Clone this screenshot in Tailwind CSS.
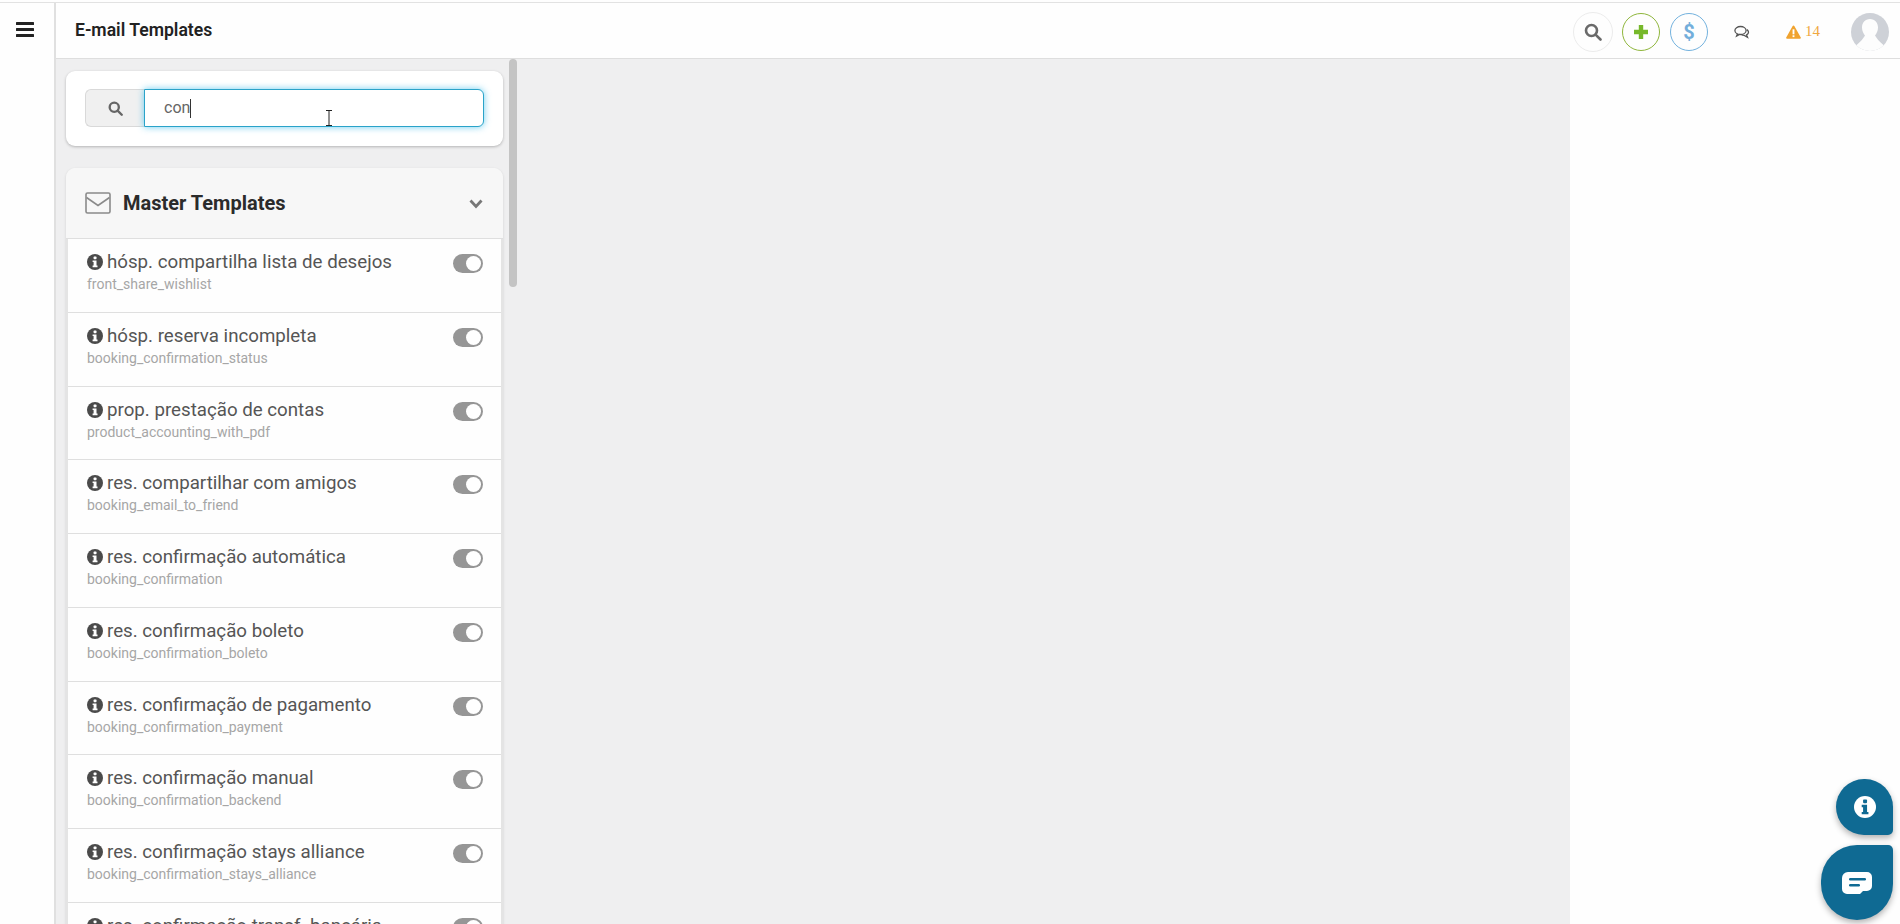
<!DOCTYPE html>
<html lang="pt-BR">
<head>
    <meta charset="UTF-8">
    <title>E-mail Templates</title>
    <script src="https://cdn.jsdelivr.net/npm/@tailwindcss/browser@4"></script>
</head>
<body class="h-screen overflow-hidden bg-[#fefefe] font-['Roboto',sans-serif]">
    <svg class="hidden">
        <symbol id="info" viewBox="0 0 16 16">
            <circle cx="8" cy="8" r="8" fill="#4a4a4a"/>
            <rect x="6.6" y="2.6" width="2.9" height="2.6" rx="0.6" fill="#fff"/>
            <path d="M5.6 6.4h3.900v5.200h1v1.700H5.600v-1.700h1V8.100h-1z" fill="#fff"/>
        </symbol>
    </svg>

    <div class="h-[2px]"></div>
    <div class="flex h-[922px] border-t border-[#e2e2e2]">
        <!-- sidebar -->
        <aside class="w-[56px] shrink-0 border-r-2 border-[#e0e0e0] pt-[19px] pl-[16px]">
            <svg width="18" height="15" viewBox="0 0 18 15" fill="#222"><rect y="0" width="18" height="3" rx="0.5"/><rect y="6" width="18" height="3" rx="0.5"/><rect y="12" width="18" height="3" rx="0.5"/></svg>
        </aside>

        <div class="flex-1 flex flex-col min-w-0">
            <!-- top bar -->
            <header class="h-[56px] shrink-0 border-b border-[#dedede] flex items-center pl-[19px]">
                <h1 class="text-[17.6px] font-semibold text-[#222]">E-mail Templates</h1>
                <div class="ml-auto mt-[2px] flex items-center pr-[11px]">
                    <div class="w-[40px] h-[40px] rounded-full border border-[#ececec] flex items-center justify-center">
                        <svg width="18" height="18" viewBox="0 0 18 18" fill="none" stroke="#6a6a6a" stroke-width="2.6"><circle cx="7.5" cy="7.5" r="5.5"/><path d="M11.800 11.800L16.500 16.500" stroke-linecap="round"/></svg>
                    </div>
                    <div class="w-[38px] h-[38px] ml-[9px] rounded-full border border-[#8fb63c] flex items-center justify-center">
                        <svg width="16" height="16" viewBox="0 0 16 16" fill="#76b82a"><path d="M5.800 1h4.400v4.800H15v4.400h-4.800V15H5.800v-4.800H1V5.800h4.800z"/></svg>
                    </div>
                    <div class="w-[38px] h-[38px] ml-[10px] rounded-full border border-[#73b2de] flex items-center justify-center text-[20px] font-bold leading-none text-[#73aedb]">$</div>
                    <svg class="ml-[26px]" width="16" height="14" viewBox="0 0 16 14" fill="none" stroke="#555" stroke-width="1.3"><ellipse cx="6.500" cy="5.500" rx="5.600" ry="4"/><path d="M3.500 8.800L2.600 11l3-1.600"/><path d="M12.800 4.600c1.600 1 2.200 2.600 1.200 4-.3.500-.8.900-1.400 1.200l.9 2.400-3.200-1.800c-1.200 0-2.300-.3-3-.9"/></svg>
                    <svg class="ml-[36px]" width="15" height="14" viewBox="0 0 16 15"><path d="M8 .5a1 1 0 0 1 .9.5l6.900 12.300a1 1 0 0 1-.9 1.500H1.100a1 1 0 0 1-.9-1.500L7.100 1A1 1 0 0 1 8 .5z" fill="#f0a32f"/><rect x="7" y="4.600" width="2" height="5.400" fill="#fff"/><rect x="7" y="11" width="2" height="2" fill="#fff"/></svg>
                    <span class="ml-[4px] w-[15px] text-[15px] leading-none text-[#f0a840] font-['Liberation_Serif',serif]">14</span>
                    <div class="ml-[31px] w-[38px] h-[38px] rounded-full bg-[#ced1d7] overflow-hidden">
                        <svg width="38" height="38" viewBox="0 0 38 38"><path d="M19 6c5 0 8 4 8 8.500 0 3.500-1.500 6-3 8 1.500 2.500 4 6 9 10l5 1v5H0v-5l5-1c5-4 7.500-7.500 9-10-1.500-2-3-4.500-3-8C11 10 14 6 19 6z" fill="#fdfdfd"/></svg>
                    </div>
                </div>
            </header>

            <!-- content -->
            <div class="flex-1 flex min-h-0">
                <div class="relative w-[1514px] shrink-0 bg-[#efeff0] pl-[10px] pt-[12px] overflow-hidden">
                    <!-- search card -->
                    <div class="w-[437px] h-[75px] bg-white rounded-[9px] shadow-[0_1px_3px_rgba(0,0,0,0.25)] pl-[19px] pt-[18px]">
                        <div class="flex h-[38px] w-[399px]">
                            <div class="w-[59px] shrink-0 bg-[#f0f0f0] border border-[#d9d9d9] border-r-0 rounded-l-[6px] flex items-center justify-center">
                                <svg width="15" height="15" viewBox="0 0 18 18" fill="none" stroke="#666" stroke-width="2.800"><circle cx="7.500" cy="7.500" r="5.500"/><path d="M11.800 11.800L16.500 16.500" stroke-linecap="round"/></svg>
                            </div>
                            <div class="flex-1 bg-white border border-[#2aa3c9] rounded-r-[6px] shadow-[0_0_7px_rgba(60,190,235,0.75)] flex items-center pl-[19px] text-[16px] text-[#666]">
                                <span>con</span><span class="w-px h-[19px] bg-[#333]"></span>
                            </div>
                        </div>
                    </div>

                    <!-- templates card -->
                    <section class="mt-[22px] w-[437px] bg-white rounded-t-[9px] border-x-2 border-[#e4e4e4] shadow-[0_1px_3px_rgba(0,0,0,0.12)]">
                        <div class="h-[71px] -mx-[2px] bg-[#f7f7f7] rounded-t-[9px] border-b border-[#dfdfdf] flex items-center pl-[19px] pr-[20px]">
                            <svg width="26" height="22" viewBox="0 0 26 22" fill="none" stroke="#8a8a8a" stroke-width="1.600"><rect x="1" y="1" width="24" height="20" rx="1.500"/><path d="M1.500 5.500L13 13.500L24.500 5.500"/></svg>
                            <h2 class="ml-[12px] text-[20px] font-bold text-[#2b2b2b]">Master Templates</h2>
                            <svg class="ml-auto mt-[2px]" width="14" height="10" viewBox="0 0 14 10" fill="none" stroke="#777" stroke-width="2.800"><path d="M1.500 1.500L7 7.500L12.500 1.500"/></svg>
                        </div>

                        <div class="h-[73.75px] border-b border-[#dfdfdf] pl-[19px] pr-[18px] pt-[11px] flex justify-between bg-[#fefefe]">
                            <div>
                                <p class="flex items-center gap-[4px] text-[18.72px] leading-[24px] text-[#555]"><svg class="w-[16px] h-[16px]"><use href="#info"/></svg>hósp. compartilha lista de desejos</p>
                                <p class="text-[14px] leading-[20px] text-[#a6a6a6]">front_share_wishlist</p>
                            </div>
                            <div class="mt-[4px] w-[30px] h-[19px] rounded-full bg-[#969696] flex items-center justify-end pr-[2px]"><span class="w-[15px] h-[15px] rounded-full bg-white"></span></div>
                        </div>
                        <div class="h-[73.75px] border-b border-[#dfdfdf] pl-[19px] pr-[18px] pt-[11px] flex justify-between bg-[#fefefe]">
                            <div>
                                <p class="flex items-center gap-[4px] text-[18.72px] leading-[24px] text-[#555]"><svg class="w-[16px] h-[16px]"><use href="#info"/></svg>hósp. reserva incompleta</p>
                                <p class="text-[14px] leading-[20px] text-[#a6a6a6]">booking_confirmation_status</p>
                            </div>
                            <div class="mt-[4px] w-[30px] h-[19px] rounded-full bg-[#969696] flex items-center justify-end pr-[2px]"><span class="w-[15px] h-[15px] rounded-full bg-white"></span></div>
                        </div>
                        <div class="h-[73.75px] border-b border-[#dfdfdf] pl-[19px] pr-[18px] pt-[11px] flex justify-between bg-[#fefefe]">
                            <div>
                                <p class="flex items-center gap-[4px] text-[18.72px] leading-[24px] text-[#555]"><svg class="w-[16px] h-[16px]"><use href="#info"/></svg>prop. prestação de contas</p>
                                <p class="text-[14px] leading-[20px] text-[#a6a6a6]">product_accounting_with_pdf</p>
                            </div>
                            <div class="mt-[4px] w-[30px] h-[19px] rounded-full bg-[#969696] flex items-center justify-end pr-[2px]"><span class="w-[15px] h-[15px] rounded-full bg-white"></span></div>
                        </div>
                        <div class="h-[73.75px] border-b border-[#dfdfdf] pl-[19px] pr-[18px] pt-[11px] flex justify-between bg-[#fefefe]">
                            <div>
                                <p class="flex items-center gap-[4px] text-[18.72px] leading-[24px] text-[#555]"><svg class="w-[16px] h-[16px]"><use href="#info"/></svg>res. compartilhar com amigos</p>
                                <p class="text-[14px] leading-[20px] text-[#a6a6a6]">booking_email_to_friend</p>
                            </div>
                            <div class="mt-[4px] w-[30px] h-[19px] rounded-full bg-[#969696] flex items-center justify-end pr-[2px]"><span class="w-[15px] h-[15px] rounded-full bg-white"></span></div>
                        </div>
                        <div class="h-[73.75px] border-b border-[#dfdfdf] pl-[19px] pr-[18px] pt-[11px] flex justify-between bg-[#fefefe]">
                            <div>
                                <p class="flex items-center gap-[4px] text-[18.72px] leading-[24px] text-[#555]"><svg class="w-[16px] h-[16px]"><use href="#info"/></svg>res. confirmação automática</p>
                                <p class="text-[14px] leading-[20px] text-[#a6a6a6]">booking_confirmation</p>
                            </div>
                            <div class="mt-[4px] w-[30px] h-[19px] rounded-full bg-[#969696] flex items-center justify-end pr-[2px]"><span class="w-[15px] h-[15px] rounded-full bg-white"></span></div>
                        </div>
                        <div class="h-[73.75px] border-b border-[#dfdfdf] pl-[19px] pr-[18px] pt-[11px] flex justify-between bg-[#fefefe]">
                            <div>
                                <p class="flex items-center gap-[4px] text-[18.72px] leading-[24px] text-[#555]"><svg class="w-[16px] h-[16px]"><use href="#info"/></svg>res. confirmação boleto</p>
                                <p class="text-[14px] leading-[20px] text-[#a6a6a6]">booking_confirmation_boleto</p>
                            </div>
                            <div class="mt-[4px] w-[30px] h-[19px] rounded-full bg-[#969696] flex items-center justify-end pr-[2px]"><span class="w-[15px] h-[15px] rounded-full bg-white"></span></div>
                        </div>
                        <div class="h-[73.75px] border-b border-[#dfdfdf] pl-[19px] pr-[18px] pt-[11px] flex justify-between bg-[#fefefe]">
                            <div>
                                <p class="flex items-center gap-[4px] text-[18.72px] leading-[24px] text-[#555]"><svg class="w-[16px] h-[16px]"><use href="#info"/></svg>res. confirmação de pagamento</p>
                                <p class="text-[14px] leading-[20px] text-[#a6a6a6]">booking_confirmation_payment</p>
                            </div>
                            <div class="mt-[4px] w-[30px] h-[19px] rounded-full bg-[#969696] flex items-center justify-end pr-[2px]"><span class="w-[15px] h-[15px] rounded-full bg-white"></span></div>
                        </div>
                        <div class="h-[73.75px] border-b border-[#dfdfdf] pl-[19px] pr-[18px] pt-[11px] flex justify-between bg-[#fefefe]">
                            <div>
                                <p class="flex items-center gap-[4px] text-[18.72px] leading-[24px] text-[#555]"><svg class="w-[16px] h-[16px]"><use href="#info"/></svg>res. confirmação manual</p>
                                <p class="text-[14px] leading-[20px] text-[#a6a6a6]">booking_confirmation_backend</p>
                            </div>
                            <div class="mt-[4px] w-[30px] h-[19px] rounded-full bg-[#969696] flex items-center justify-end pr-[2px]"><span class="w-[15px] h-[15px] rounded-full bg-white"></span></div>
                        </div>
                        <div class="h-[73.75px] border-b border-[#dfdfdf] pl-[19px] pr-[18px] pt-[11px] flex justify-between bg-[#fefefe]">
                            <div>
                                <p class="flex items-center gap-[4px] text-[18.72px] leading-[24px] text-[#555]"><svg class="w-[16px] h-[16px]"><use href="#info"/></svg>res. confirmação stays alliance</p>
                                <p class="text-[14px] leading-[20px] text-[#a6a6a6]">booking_confirmation_stays_alliance</p>
                            </div>
                            <div class="mt-[4px] w-[30px] h-[19px] rounded-full bg-[#969696] flex items-center justify-end pr-[2px]"><span class="w-[15px] h-[15px] rounded-full bg-white"></span></div>
                        </div>
                        <div class="h-[73.75px] border-b border-[#dfdfdf] pl-[19px] pr-[18px] pt-[11px] flex justify-between bg-[#fefefe]">
                            <div>
                                <p class="flex items-center gap-[4px] text-[18.72px] leading-[24px] text-[#555]"><svg class="w-[16px] h-[16px]"><use href="#info"/></svg>res. confirmação transf. bancária</p>
                            </div>
                            <div class="mt-[4px] w-[30px] h-[19px] rounded-full bg-[#969696] flex items-center justify-end pr-[2px]"><span class="w-[15px] h-[15px] rounded-full bg-white"></span></div>
                        </div>
                    </section>

                    <!-- scrollbar thumb -->
                    <div class="absolute left-[453px] top-0 w-[8px] h-[228px] rounded-full bg-[#c4c4c4]"></div>
                </div>
                <div class="flex-1 bg-[#fefefe]"></div>
            </div>
        </div>
    </div>

    <!-- text cursor over the input -->
    <svg class="absolute left-[325px] top-[110px]" width="8" height="16" viewBox="0 0 8 16" fill="none" stroke="#222" stroke-width="1"><path d="M1 .5h6M4 .5v15M1 15.500h6"/></svg>

    <!-- floating buttons -->
    <div class="absolute left-[1836px] top-[779px] w-[57px] h-[56px] bg-[#0f6a93] rounded-[28px] rounded-br-[5px] shadow-[0_3px_6px_rgba(0,0,0,0.3)] flex items-center justify-center">
        <svg class="w-[22px] h-[22px]" viewBox="0 0 16 16"><circle cx="8" cy="8" r="8" fill="#fff"/><rect x="6.600" y="2.600" width="2.900" height="2.600" rx="0.600" fill="#0f6a93"/><path d="M5.600 6.400h3.900v5.200h1v1.700H5.600v-1.700h1V8.100h-1z" fill="#0f6a93"/></svg>
    </div>
    <div class="absolute left-[1821px] top-[845px] w-[72px] h-[75px] bg-[#0f6a93] rounded-[37px] rounded-tr-[5px] shadow-[0_3px_6px_rgba(0,0,0,0.3)] flex items-center justify-center">
        <svg width="30" height="22" viewBox="0 0 30 22"><path d="M6 0h19a5 5 0 0 1 5 5v9a5 5 0 0 1-5 5l-4 0-3 3H5a5 5 0 0 1-5-5V6a6 6 0 0 1 6-6z" fill="#fff"/><rect x="7" y="6" width="17" height="2.400" rx="1.200" fill="#0f6a93"/><rect x="7" y="12" width="11" height="2.400" rx="1.200" fill="#0f6a93"/></svg>
    </div>
</body>
</html>
